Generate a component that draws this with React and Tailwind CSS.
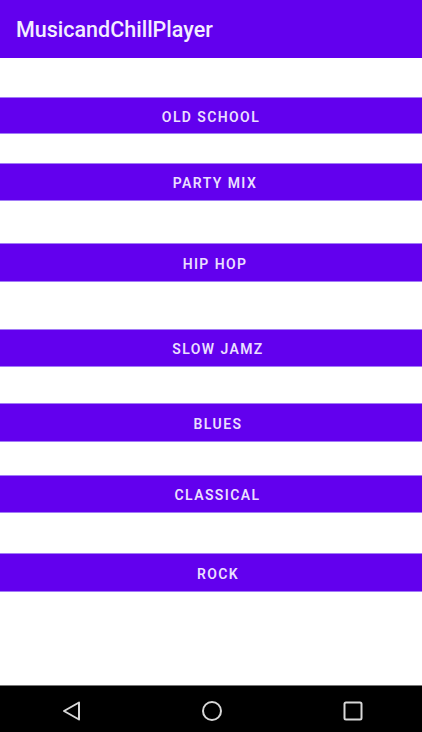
import React from "react";

const buttons = [
  { label: "OLD SCHOOL", cls: "mt-[39px] h-[37px] pl-0" },
  { label: "PARTY MIX", cls: "mt-[29px] h-[38px] pl-[8px]" },
  { label: "HIP HOP", cls: "mt-[42px] h-[39px] pl-[8px]" },
  { label: "SLOW JAMZ", cls: "mt-[47px] h-[38px] pl-[14px]" },
  { label: "BLUES", cls: "mt-[36px] h-[39px] pl-[14px]" },
  { label: "CLASSICAL", cls: "mt-[33px] h-[38px] pl-[13px]" },
  { label: "ROCK", cls: "mt-[40px] h-[39px] pl-[14px]" },
];

export default function App() {
  return (
    <div
      className="flex h-[732px] w-[422px] flex-col bg-white"
      style={{ fontFamily: "Roboto, 'Noto Sans', sans-serif" }}
    >
      <header className="flex h-[58px] items-center bg-[#6200ee] pl-4 pt-[2px]">
        <h1 className="text-[21.5px] font-medium text-[#f3eeff]">MusicandChillPlayer</h1>
      </header>
      <main className="flex flex-1 flex-col">
        {buttons.map((b) => (
          <button
            key={b.label}
            className={`${b.cls} flex w-full items-center justify-center border-y border-[#a27cf7] bg-[#6200ee] pt-[3px] text-[14px] font-semibold tracking-[1.4px] text-[#eadfff]`}
          >
            {b.label}
          </button>
        ))}
      </main>
      <nav className="flex h-[47px] items-center justify-between border-t border-[#777] bg-black pl-[61px] pr-[59px] pt-1">
        <svg width="20" height="20" viewBox="0 0 20 20" fill="none" stroke="#d8d8d8" strokeWidth="2" strokeLinejoin="round">
          <path d="M18 1.5 L3 10 L18 18.5 Z" />
        </svg>
        <svg width="22" height="22" viewBox="0 0 22 22" fill="none" stroke="#d8d8d8" strokeWidth="2">
          <circle cx="11" cy="11" r="9" />
        </svg>
        <svg width="20" height="20" viewBox="0 0 20 20" fill="none" stroke="#d8d8d8" strokeWidth="2">
          <rect x="1.5" y="1.5" width="17" height="17" rx="1.5" />
        </svg>
      </nav>
    </div>
  );
}
